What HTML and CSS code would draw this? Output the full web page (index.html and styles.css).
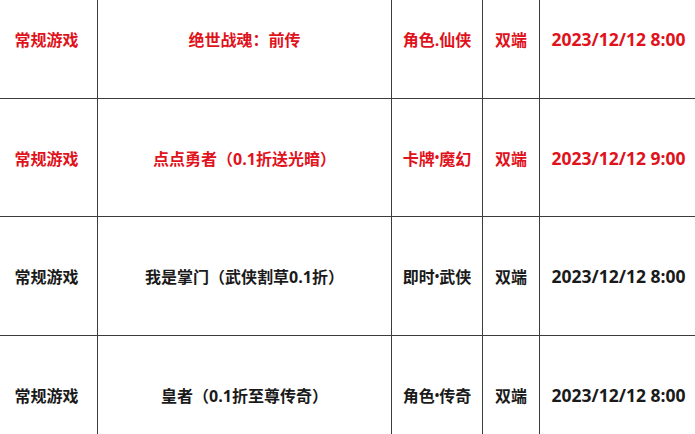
FILE: index.html
```html
<!DOCTYPE html>
<html lang="zh-CN">
<head>
<meta charset="utf-8">
<link rel="stylesheet" href="styles.css">
</head>
<body>
<div class="table">
  <div class="row row-a red">
    <div class="cell c1">常规游戏</div>
    <div class="cell c2">绝世战魂：前传</div>
    <div class="cell c3">角色.仙侠</div>
    <div class="cell c4">双端</div>
    <div class="cell c5">2023/12/12 8:00</div>
  </div>
  <div class="row row-b red">
    <div class="cell c1">常规游戏</div>
    <div class="cell c2">点点勇者（0.1折送光暗）</div>
    <div class="cell c3">卡牌<span class="dot">•</span>魔幻</div>
    <div class="cell c4">双端</div>
    <div class="cell c5">2023/12/12 9:00</div>
  </div>
  <div class="row row-a">
    <div class="cell c1">常规游戏</div>
    <div class="cell c2">我是掌门（武侠割草0.1折）</div>
    <div class="cell c3">即时<span class="dot">•</span>武侠</div>
    <div class="cell c4">双端</div>
    <div class="cell c5">2023/12/12 8:00</div>
  </div>
  <div class="row row-b last">
    <div class="cell c1">常规游戏</div>
    <div class="cell c2">皇者（0.1折至尊传奇）</div>
    <div class="cell c3">角色<span class="dot">•</span>传奇</div>
    <div class="cell c4">双端</div>
    <div class="cell c5">2023/12/12 8:00</div>
  </div>
</div>
</body>
</html>
```
FILE: styles.css
```css
html, body {
  margin: 0;
  padding: 0;
  background: #ffffff;
  overflow: hidden;
}
body {
  width: 695px;
  height: 434px;
  font-family: "Open Sans", "Noto Sans CJK SC", sans-serif;
  font-weight: 700;
  font-size: 16px;
  color: #1a1a1a;
}
.table {
  margin-top: -20px;
  display: flex;
  flex-direction: column;
}
.row {
  display: grid;
  grid-template-columns: 98px 294px 91px 57px 1fr;
  height: 119px;
  border-bottom: 1px solid #3c3c3c;
  box-sizing: border-box;
}
.row-b { height: 118px; }
.row.last { height: 119px; }
.red { color: #e0121c; }
.cell {
  display: flex;
  align-items: center;
  justify-content: center;
  border-right: 1px solid #3c3c3c;
  white-space: nowrap;
}
.c1 { padding-right: 4px; }
.c5 {
  border-right: none;
  padding-left: 2px;
  font-size: 17.5px;
}
.dot { font-size: 12px; }
```
